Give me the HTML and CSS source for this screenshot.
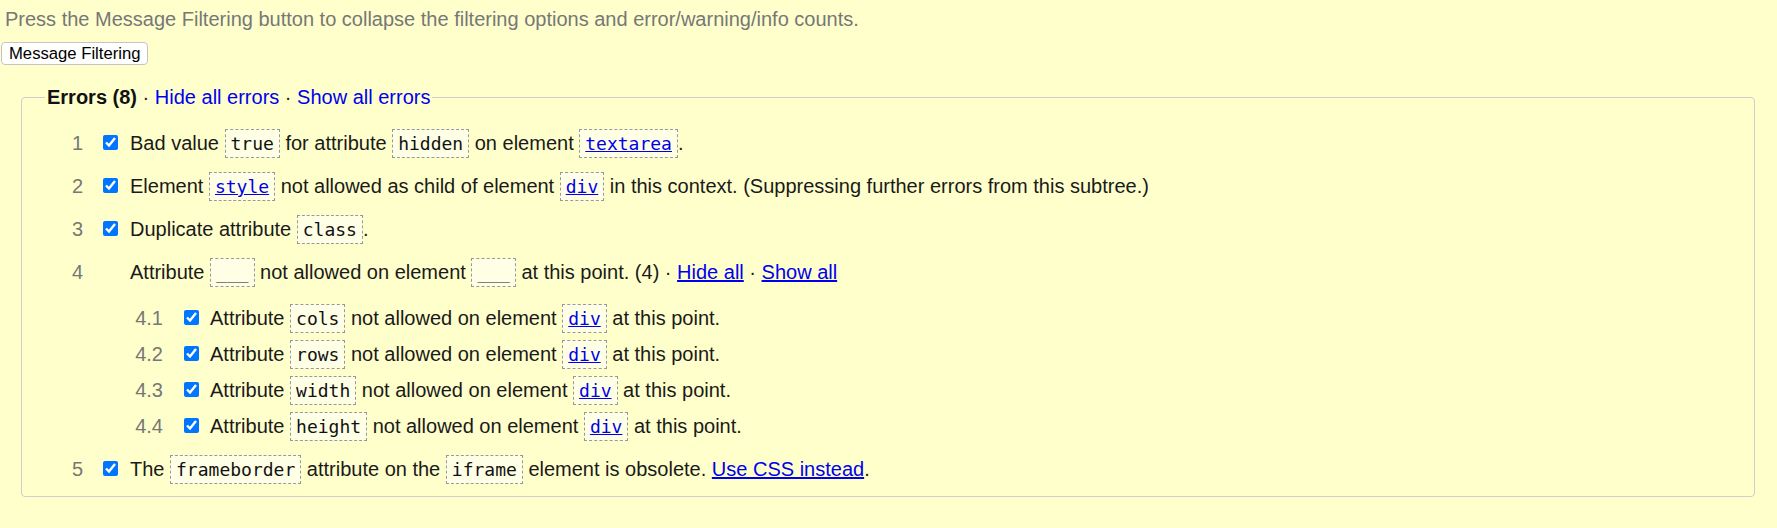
FILE: index.html
```html
<!DOCTYPE html>
<html lang="en">
<head>
<meta charset="utf-8">
<title>Message Filtering</title>
<link rel="stylesheet" href="styles.css">
</head>
<body>
<p class="hint">Press the Message Filtering button to collapse the filtering options and error/warning/info counts.</p>
<div class="bar"><button class="filter-btn" type="button">Message Filtering</button></div>
<fieldset class="group">
  <legend class="group-title"><strong>Errors (8)</strong> · <a href="#" class="plain">Hide all errors</a> · <a href="#" class="plain">Show all errors</a></legend>
  <ol class="msgs">
    <li class="msg"><span class="num">1</span><input class="cb" type="checkbox" checked><span class="txt">Bad value <code>true</code> for attribute <code>hidden</code> on element <code><a href="#">textarea</a></code>.</span></li>
    <li class="msg"><span class="num">2</span><input class="cb" type="checkbox" checked><span class="txt">Element <code><a href="#">style</a></code> not allowed as child of element <code><a href="#">div</a></code> in this context. (Suppressing further errors from this subtree.)</span></li>
    <li class="msg"><span class="num">3</span><input class="cb" type="checkbox" checked><span class="txt">Duplicate attribute <code>class</code>.</span></li>
    <li class="msg group-msg">
      <div class="msg-head"><span class="num">4</span><span class="cb-space"></span><span class="txt">Attribute <code>___</code> not allowed on element <code>___</code> at this point. (4) · <a href="#">Hide all</a> · <a href="#">Show all</a></span></div>
      <ol class="msgs sub">
        <li class="msg"><span class="num">4.1</span><input class="cb" type="checkbox" checked><span class="txt">Attribute <code>cols</code> not allowed on element <code><a href="#">div</a></code> at this point.</span></li>
        <li class="msg"><span class="num">4.2</span><input class="cb" type="checkbox" checked><span class="txt">Attribute <code>rows</code> not allowed on element <code><a href="#">div</a></code> at this point.</span></li>
        <li class="msg"><span class="num">4.3</span><input class="cb" type="checkbox" checked><span class="txt">Attribute <code>width</code> not allowed on element <code><a href="#">div</a></code> at this point.</span></li>
        <li class="msg"><span class="num">4.4</span><input class="cb" type="checkbox" checked><span class="txt">Attribute <code>height</code> not allowed on element <code><a href="#">div</a></code> at this point.</span></li>
      </ol>
    </li>
    <li class="msg"><span class="num">5</span><input class="cb" type="checkbox" checked><span class="txt">The <code>frameborder</code> attribute on the <code>iframe</code> element is obsolete. <a href="#">Use CSS instead</a>.</span></li>
  </ol>
</fieldset>
</body>
</html>
```
FILE: styles.css
```css
html, body {
  margin: 0;
  padding: 0;
  background: #ffffcc;
}
body {
  font-family: "Liberation Sans", Arial, sans-serif;
  font-size: 20px;
  color: #1a1a1a;
}
.hint {
  margin: 0;
  padding: 8px 5px 0;
  line-height: 23px;
  color: #777;
}
.bar {
  margin-top: 11px;
  padding-left: 1px;
  height: 23px;
}
.filter-btn {
  font-family: "Liberation Sans", Arial, sans-serif;
  font-size: 16.67px;
  line-height: 19px;
  height: 23px;
  padding: 1px 7px;
  margin: 0;
  border: 1px solid #c4c4c4;
  border-radius: 4px;
  background: #fff;
  color: #000;
  display: block;
}
.group {
  margin: 21px 22px 0 21px;
  padding: 13px 0 5px 0;
  border: 1px solid #cfcfcf;
  border-radius: 4px;
  min-width: 0;
}
.group-title {
  margin-left: 23px;
  padding: 0 2px;
  line-height: 23px;
  color: #1a1a1a;
}
.group-title strong {
  color: #111;
}
a {
  color: #0000ee;
}
a.plain {
  text-decoration: none;
}
.msgs {
  list-style: none;
  margin: 0;
  padding: 0;
}
.msg {
  line-height: 43px;
  height: 43px;
  white-space: nowrap;
}
.group-msg {
  height: auto;
}
.msg-head {
  height: 43px;
}
.num {
  display: inline-block;
  width: 40px;
  margin-left: 21px;
  text-align: right;
  color: #777;
}
.cb {
  width: 15px;
  height: 15px;
  margin: 0 0 6px 20px;
  vertical-align: baseline;
}
.cb-space {
  display: inline-block;
  width: 15px;
  margin-left: 20px;
}
.txt {
  margin-left: 12px;
}
.sub {
  margin: 5.5px 0 4.5px 80px;
}
.sub .msg {
  line-height: 36px;
  height: 36px;
}
.sub .txt {
  margin-left: 11px;
}
.sub .cb {
  margin-left: 21px;
}
code {
  font-family: "DejaVu Sans Mono", monospace;
  font-size: 18px;
  padding: 3px 5px;
  border: 1px dashed #999;
  background: #ffffe6;
  color: #111;
}
code a {
  color: #0000ee;
}
```
